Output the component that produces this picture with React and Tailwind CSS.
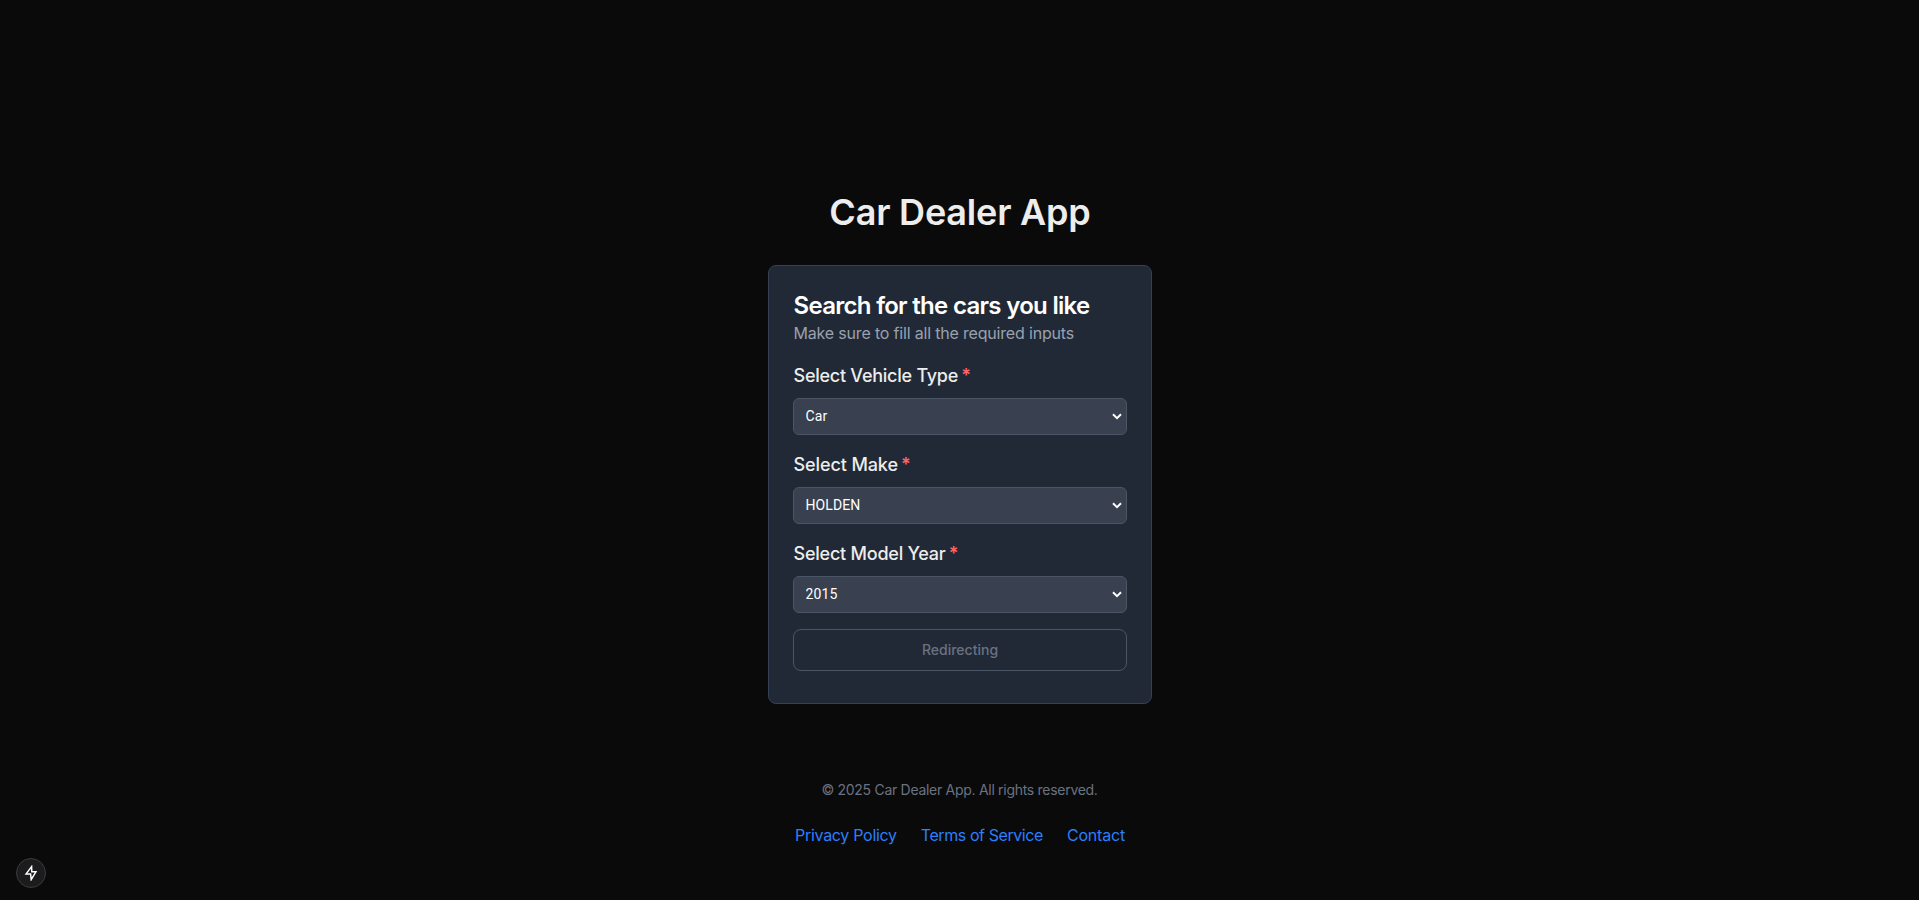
import React from "react";

const fields = [
  { id: "type", label: "Select Vehicle Type", value: "Car", spacing: "tracking-[-0.25px]" },
  { id: "make", label: "Select Make", value: "HOLDEN", spacing: "tracking-[-0.1px]" },
  { id: "year", label: "Select Model Year", value: "2015", spacing: "tracking-[-0.22px]" },
];

function Field({ id, label, value, spacing }) {
  return (
    <div className="flex flex-col gap-2">
      <label htmlFor={id} className={`pl-px text-lg leading-7 font-medium text-[#ededed] whitespace-nowrap ${spacing}`}>
        {label} <span className="-ml-[1.5px] font-semibold text-[#ff6467]">*</span>
      </label>
      <div className="grid">
        <select
          id={id}
          defaultValue={value}
          className="col-start-1 row-start-1 h-[37px] w-full appearance-none rounded-md border border-[#4a5565] bg-[#394150] px-3 pb-px font-['Roboto',sans-serif] text-sm font-[450] tracking-[0.1px] text-white"
        >
          <option>{value}</option>
        </select>
        <svg className="pointer-events-none col-start-1 row-start-1 mr-[5px] self-center justify-self-end" width="10" height="7" viewBox="0 0 10 7" fill="none" stroke="white" strokeWidth="2">
          <path d="M1 1.3 5 5.1 9 1.3" />
        </svg>
      </div>
    </div>
  );
}

export default function App() {
  return (
    <div className="flex h-[900px] flex-col items-center bg-[#0a0a0a] font-['Inter',sans-serif] text-[#ededed]">
      <h1 className="mt-48 pl-px text-4xl leading-10 font-semibold tracking-[-0.2px] whitespace-nowrap">Car Dealer App</h1>
      <main className="mt-[33px] h-[439px] w-96 rounded-lg border border-[#364153] bg-[#212936] p-6">
        <h2 className="pl-px text-2xl leading-8 font-semibold tracking-[-0.7px] text-white whitespace-nowrap">Search for the cars you like</h2>
        <p className="-mt-px pl-px text-base leading-6 tracking-[-0.18px] text-[#99a1af] whitespace-nowrap">Make sure to fill all the required inputs</p>
        <form className="mt-[17px] flex flex-col gap-4">
          {fields.map((f) => (
            <Field key={f.id} {...f} />
          ))}
          <button type="button" disabled className="h-[42px] w-full rounded-lg border border-[#4a5565] pl-px text-sm font-medium text-[#6a7282]">
            Redirecting
          </button>
        </form>
      </main>
      <footer className="mt-[76px] flex flex-col items-center">
        <p className="text-sm leading-5 tracking-[-0.29px] text-[#6a7282] whitespace-nowrap">© 2025 Car Dealer App. All rights reserved.</p>
        <nav className="mt-[23px] flex gap-6 pl-px text-base leading-6 text-[#2b7fff] whitespace-nowrap">
          <a className="tracking-[-0.3px]">Privacy Policy</a>
          <a className="tracking-[-0.42px]">Terms of Service</a>
          <a className="tracking-[-0.2px]">Contact</a>
        </nav>
      </footer>
      <div className="fixed bottom-3 left-4 flex size-[30px] items-center justify-center rounded-full border border-[#3c3c3e] bg-[#1c1c1e]">
        <svg width="16" height="16" viewBox="0 0 16 16" fill="none" stroke="white" strokeWidth="1.5">
          <path d="M8.6 1.6 3.1 8.9H7.6L8.2 14.6 12.9 6.8H8.8Z" />
        </svg>
      </div>
    </div>
  );
}
